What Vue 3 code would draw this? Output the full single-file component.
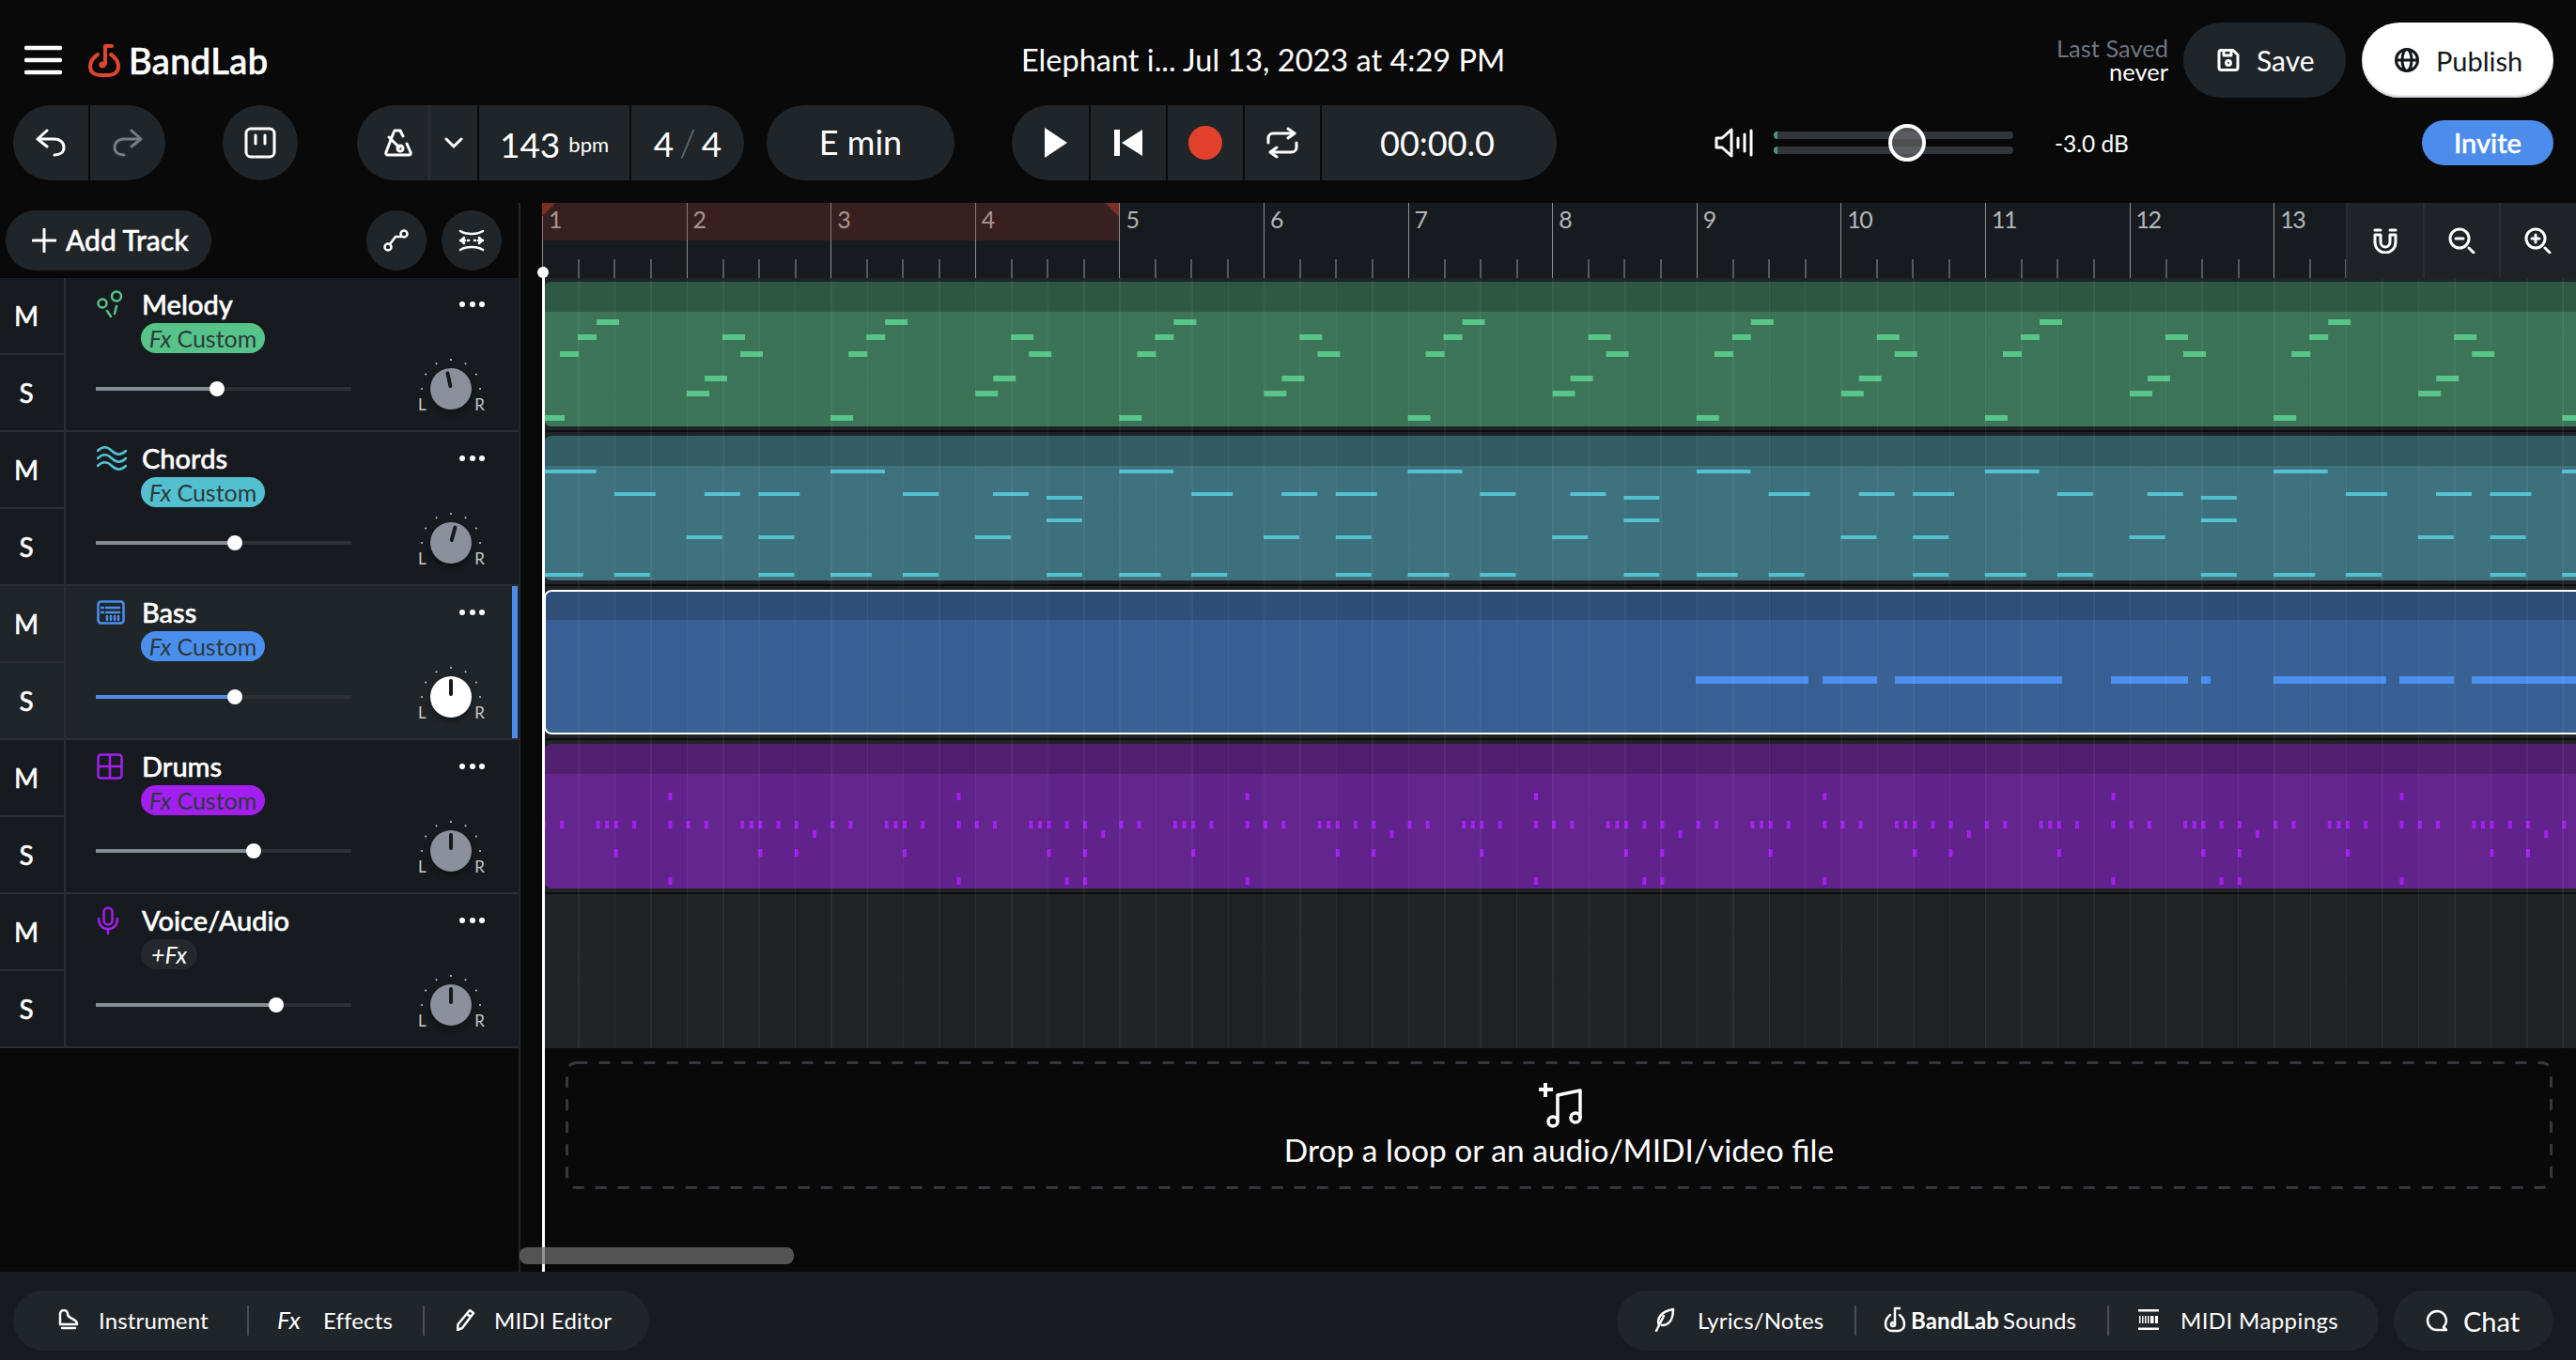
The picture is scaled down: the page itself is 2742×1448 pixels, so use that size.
<script setup>
const BAR_WIDTH = 153.6
const LANE_WIDTH = 2166

const bars = Array.from({ length: 14 }, (_, i) => i + 1)

// repeats a note pattern along the whole lane, notes are [offset, width, top]
function repeatNotes(pattern, period, height) {
  const notes = []
  for (let start = 0; start < LANE_WIDTH; start += period) {
    for (const [x, w, y] of pattern) {
      notes.push({ x: start + x - 2, w, y, h: height })
    }
  }
  return notes
}

const melodyPattern = [
  [0, 24, 142], [19, 20, 74], [38, 20, 56], [58, 24, 40],
  [154, 24, 116], [173, 24, 100], [192, 24, 56], [211, 24, 74]
]

const chordsPattern = [
  [0, 57.6, 36], [307, 58, 36],
  [76.8, 44, 60], [172.8, 38, 60], [230.4, 44, 60], [384, 38, 60], [480, 38, 60],
  [537, 38, 64], [537, 38, 88],
  [153.6, 38, 106], [230.4, 38, 106], [460.8, 38, 106],
  [0, 44, 146], [76.8, 38, 146], [230.4, 38, 146], [307, 44, 146], [384, 38, 146], [537, 38, 146]
]

const bassNotes = [
  [1804, 120], [1939, 58], [2016, 178], [2246, 82], [2342, 10],
  [2419, 120], [2553, 58], [2630, 112]
].map(([x, w]) => ({ x: x - 578, w, y: 92, h: 8 }))

const drumsPattern = [
  ...[0, 19.2, 57.6, 67.2, 76.8, 96, 134.4, 153.6, 172.8, 211.2, 220.8, 230.4, 249.6, 268.8].flatMap((x) => [
    [x, 4, 82],
    [x + 307.2, 4, 82]
  ]),
  [134.4, 4, 52], [441.6, 4, 52],
  [288, 4, 92], [595.2, 4, 92],
  [76.8, 4, 112], [230.4, 4, 112], [268.8, 4, 112], [384, 4, 112], [537.6, 4, 112], [576, 4, 112],
  [134.4, 4, 142], [441.6, 4, 142], [556.8, 4, 142], [576, 4, 142]
]

const tracks = [
  { id: 'melody', name: 'Melody', pan: -12, volume: 129, notes: repeatNotes(melodyPattern, 307.2, 6) },
  { id: 'chords', name: 'Chords', pan: 15, volume: 148, notes: repeatNotes(chordsPattern, 614.4, 4) },
  { id: 'bass', name: 'Bass', pan: 0, volume: 148, notes: bassNotes, selected: true },
  { id: 'drums', name: 'Drums', pan: 0, volume: 168, notes: repeatNotes(drumsPattern, 614.4, 8) },
  { id: 'voice', name: 'Voice/Audio', pan: 0, volume: 192, empty: true }
]

const knobTicks = [-90, -60, -30, 0, 30, 60, 90].map((deg) => {
  const rad = (deg * Math.PI) / 180
  return { x: 36 + 31 * Math.sin(rad), y: 34 - 31 * Math.cos(rad) }
})
</script>

<template>
  <div class="daw">
    <header class="header">
      <div class="header-top">
        <div class="brand">
          <svg class="burger" width="40" height="32" viewBox="0 0 40 32">
            <path d="M2 3h36M2 16h36M2 29h36" />
          </svg>
          <svg class="logo" width="36" height="36" viewBox="0 0 36 36">
            <path d="M11 12C5 16 3 21 3 25c0 6 5 9 10 9h10c5 0 10-3 10-9 0-4-2-9-8-13" />
            <path d="M19 22V3h7" />
            <circle cx="16" cy="23" r="3.6" class="logo-dot" />
          </svg>
          <span class="brand-name">BandLab</span>
        </div>
        <div class="title">Elephant i... Jul 13, 2023 at 4:29 PM</div>
        <div class="save-area">
          <div class="last-saved">
            <span class="last-saved-label">Last Saved</span>
            <span>never</span>
          </div>
          <button class="btn btn-save">
            <svg class="ico" width="24" height="24" viewBox="0 0 24 24">
              <path d="M4 1.5h13l5 5V20a2.5 2.5 0 0 1-2.5 2.5h-15A2.5 2.5 0 0 1 2 20V4a2.5 2.5 0 0 1 2-2.5z" />
              <path d="M7 2v5h8V2" />
              <circle cx="12" cy="15" r="2.4" />
            </svg>
            Save
          </button>
          <button class="btn btn-publish">
            <svg class="ico" width="26" height="26" viewBox="0 0 26 26">
              <circle cx="13" cy="13" r="11.5" />
              <ellipse cx="13" cy="13" rx="5" ry="11.5" />
              <path d="M2 13h22" />
            </svg>
            Publish
          </button>
        </div>
      </div>

      <div class="header-controls">
        <div class="segments undo-group">
          <div class="seg seg-undo">
            <svg class="ico" width="32" height="30" viewBox="0 0 32 30">
              <path d="M12 2 2 11l10 8M2 11h18c6 0 10 4 10 9s-4 8-10 8" />
            </svg>
          </div>
          <div class="seg seg-undo seg-muted">
            <svg class="ico" width="32" height="30" viewBox="0 0 32 30">
              <path d="M20 2l10 9-10 8M30 11H12C6 11 2 15 2 20s4 8 10 8" />
            </svg>
          </div>
        </div>

        <button class="round-btn round-pause">
          <svg class="ico" width="34" height="34" viewBox="0 0 34 34">
            <rect x="2" y="2" width="30" height="30" rx="5" />
            <path d="M12 9v9M22 9v9" />
          </svg>
        </button>

        <div class="segments tempo-group">
          <div class="seg seg-metronome">
            <svg class="ico" width="30" height="30" viewBox="0 0 30 30">
              <path d="M11 2h6l3 6M24 16l4 9c.6 2-.5 3-2 3H4c-1.500 0-2.600-1-2-3l8-21" />
              <path d="M5 9l11 11" />
              <circle cx="17" cy="21" r="3" />
            </svg>
          </div>
          <div class="seg seg-chevron">
            <svg class="ico" width="20" height="12" viewBox="0 0 20 12">
              <path d="M2 2l8 8 8-8" />
            </svg>
          </div>
          <div class="seg seg-bpm">
            <span class="big-value">143</span>
            <span class="bpm-unit">bpm</span>
          </div>
          <div class="seg seg-signature">
            <span class="big-value">4</span>
            <span class="signature-slash">/</span>
            <span class="big-value">4</span>
          </div>
        </div>

        <button class="round-btn key-btn">E min</button>

        <div class="segments transport">
          <div class="seg seg-transport">
            <svg width="24" height="32" viewBox="0 0 24 32"><path class="solid" d="M0 0l24 16L0 32z" /></svg>
          </div>
          <div class="seg seg-transport">
            <svg width="30" height="28" viewBox="0 0 30 28"><path class="solid" d="M0 0h6v28H0zM30 0v28L8 14z" /></svg>
          </div>
          <div class="seg seg-transport">
            <span class="record-dot" />
          </div>
          <div class="seg seg-transport">
            <svg class="ico" width="36" height="34" viewBox="0 0 36 34">
              <path d="M24 2l7 5-7 5M31 7H8a5 5 0 0 0-5 5v5M12 32l-7-5 7-5M5 27h23a5 5 0 0 0 5-5v-5" />
            </svg>
          </div>
          <div class="seg seg-time">00:00.0</div>
        </div>

        <div class="volume">
          <svg class="ico" width="42" height="32" viewBox="0 0 42 32">
            <path d="M2 11h6l10-9v28l-10-9H2z" />
            <path d="M25 11v10M32 7v18M39 3v26" />
          </svg>
          <div class="volume-slider">
            <span class="volume-bar" />
            <span class="volume-bar" />
            <span class="volume-thumb" />
          </div>
          <span class="volume-db">-3.0 dB</span>
        </div>

        <button class="btn-invite">Invite</button>
      </div>
    </header>

    <main class="main">
      <aside class="sidebar">
        <div class="sidebar-tools">
          <button class="add-track">
            <svg class="ico" width="26" height="26" viewBox="0 0 26 26"><path d="M13 1v24M1 13h24" /></svg>
            <span class="medium add-track-label">Add Track</span>
          </button>
          <button class="tool-round tool-first">
            <svg class="ico ico-thin" width="28" height="24" viewBox="0 0 28 24">
              <circle cx="5" cy="19" r="3.500" />
              <circle cx="22" cy="5" r="3.500" />
              <path d="M7 16l6-8h6" />
            </svg>
          </button>
          <button class="tool-round">
            <svg class="ico ico-thin" width="28" height="24" viewBox="0 0 28 24">
              <path d="M2 2c6 4 18 4 24 0M2 22c6-4 18-4 24 0M2 12h5M21 12h5M10 12h1M17 12h1M6 9l-3 3 3 3M22 9l3 3-3 3" />
            </svg>
          </button>
        </div>

        <div v-for="track in tracks" :key="track.id" class="track" :class="[track.id, { selected: track.selected }]">
          <div class="mute-solo">
            <button>M</button>
            <button>S</button>
          </div>
          <div class="track-body">
            <div class="track-head">
              <span class="track-icon">
                <svg v-if="track.id === 'melody'" class="ico ico-thin" width="28" height="30" viewBox="0 0 28 30">
                  <circle cx="6" cy="14" r="4.500" />
                  <circle cx="21" cy="6.500" r="5" />
                  <path d="M11 22l4 6M21 17l-2 8" />
                </svg>
                <svg v-else-if="track.id === 'chords'" class="ico ico-thin" width="32" height="26" viewBox="0 0 32 26">
                  <path d="M1 5c5-5 10-5 15 0s10 5 15 0M1 13c5-5 10-5 15 0s10 5 15 0M1 21c5-5 10-5 15 0s10 5 15 0" />
                </svg>
                <svg v-else-if="track.id === 'bass'" class="ico ico-thin" width="30" height="26" viewBox="0 0 30 26">
                  <rect x="1.500" y="1.500" width="27" height="23" rx="3" />
                  <path d="M5 8h2M10 8h14M5 13h2M10 13h14M11 21v-4M15 21v-4M19 21v-4M23 21v-4" />
                </svg>
                <svg v-else-if="track.id === 'drums'" class="ico ico-thin" width="28" height="28" viewBox="0 0 28 28">
                  <rect x="1.500" y="1.500" width="25" height="25" rx="3" />
                  <path d="M14 2v24M2 14h24" />
                </svg>
                <svg v-else class="ico ico-thin" width="24" height="30" viewBox="0 0 24 30">
                  <rect x="7.500" y="1.500" width="9" height="18" rx="4.500" />
                  <path d="M2 13c0 7 4 11 10 11s10-4 10-11M12 24v5" />
                </svg>
              </span>
              <span class="track-name medium">{{ track.name }}</span>
              <span class="track-menu"><i /><i /><i /></span>
            </div>

            <span v-if="track.empty" class="fx-add"><em>+Fx</em></span>
            <span v-else class="fx-badge"><em>Fx</em> Custom</span>

            <div class="track-controls">
              <div class="fader">
                <span class="fader-fill" :style="{ width: track.volume + 'px' }" />
                <span class="fader-thumb" />
              </div>
              <div class="knob">
                <svg class="knob-ticks" width="72" height="68" viewBox="0 0 72 68">
                  <circle v-for="(tick, i) in knobTicks" :key="i" :cx="tick.x" :cy="tick.y" r="1" />
                </svg>
                <span class="knob-dial" :style="{ transform: `rotate(${track.pan}deg)` }"><i /></span>
                <span class="knob-label knob-l">L</span>
                <span class="knob-label knob-r">R</span>
              </div>
            </div>
          </div>
        </div>
      </aside>

      <section class="timeline">
        <div class="ruler">
          <div v-for="bar in bars" :key="bar" class="ruler-bar" :style="{ flexBasis: BAR_WIDTH + 'px' }">{{ bar }}</div>
          <div class="loop-region" />
          <div class="ruler-tools">
            <button>
              <svg class="ico" width="28" height="28" viewBox="0 0 28 28">
                <path d="M3 8v8a11 11 0 0 0 22 0V8h-6v8a5 5 0 0 1-10 0V8zM3 3h6M19 3h6" />
              </svg>
            </button>
            <button>
              <svg class="ico" width="30" height="28" viewBox="0 0 30 28">
                <circle cx="12" cy="12" r="10" />
                <path d="M8 12h8M22 22l5 5" />
              </svg>
            </button>
            <button>
              <svg class="ico" width="30" height="28" viewBox="0 0 30 28">
                <circle cx="12" cy="12" r="10" />
                <path d="M8 12h8M12 8v8M22 22l5 5" />
              </svg>
            </button>
          </div>
        </div>

        <div class="lanes">
          <div v-for="track in tracks" :key="track.id" class="lane" :class="track.id">
            <div v-if="track.notes" class="clip" :class="{ selected: track.selected }">
              <svg class="clip-notes" width="100%" height="100%">
                <rect v-for="(note, i) in track.notes" :key="i" :x="note.x" :y="note.y" :width="note.w" :height="note.h" />
              </svg>
            </div>
          </div>
          <div class="lane-grid" />
        </div>

        <div class="dropzone">
          <svg class="dropzone-border" width="2115" height="136">
            <rect x="1.5" y="1.5" width="2112" height="133" rx="10" />
          </svg>
          <svg class="ico drop-icon" width="48" height="50" viewBox="0 0 48 50">
            <path class="drop-plus" d="M9 2v15M2 9h15" />
            <path d="M22 43V15l24-5v29" />
            <circle cx="17" cy="43" r="5" />
            <circle cx="41" cy="39" r="5" />
          </svg>
          <span class="dropzone-text">Drop a loop or an audio/MIDI/video file</span>
        </div>

        <div class="playhead" />
        <div class="scrollbar" />
      </section>
    </main>

    <footer class="footer">
      <div class="dock dock-left">
        <div class="dock-item dock-instrument">
          <svg class="ico ico-thin" width="22" height="22" viewBox="0 0 22 22">
            <path d="M2 16V5a4 4 0 0 1 8 0c0 4 4 4 8 7 2 1 2 2 2 4zM4 20h14" />
          </svg>
          Instrument
        </div>
        <i class="dock-sep" />
        <div class="dock-item dock-effects">
          <em class="dock-fx">Fx</em>
          Effects
        </div>
        <i class="dock-sep" />
        <div class="dock-item dock-editor">
          <svg class="ico ico-thin" width="20" height="24" viewBox="0 0 20 24">
            <path d="M14 2l4 3L6 21l-5 2 .5-6zM11 6l4 3" />
          </svg>
          MIDI Editor
        </div>
      </div>

      <div class="dock-right">
        <div class="dock dock-tools">
          <div class="dock-item dock-lyrics">
            <svg class="ico ico-thin" width="22" height="26" viewBox="0 0 22 26">
              <path d="M5 19C2 12 7 4 20 2c0 10-4 17-12 17M2 25l8-16" />
            </svg>
            Lyrics/Notes
          </div>
          <i class="dock-sep" />
          <div class="dock-item dock-sounds">
            <svg class="ico ico-thin" width="24" height="28" viewBox="0 0 24 28">
              <path d="M7 9c-4 3-5 6-5 10 0 5 4 7 7 7h6c3 0 7-2 7-7 0-4-1-7-5-10" />
              <path d="M12 19V2h5" />
              <circle cx="10" cy="19" r="2" />
            </svg>
            <span class="sounds-label"><b>BandLab</b>Sounds</span>
          </div>
          <i class="dock-sep" />
          <div class="dock-item dock-mappings">
            <svg class="midi-icon" width="22" height="22" viewBox="0 0 22 22">
              <path class="solid" d="M0 0h22v2.500H0zM0 19.500h22V22H0zM1 7h1.500v8H1zM4 7h1.500v8H4zM7 7h1.500v8H7zM10 7h1.500v8H10zM13 7h3.500v8H13zM18 7h3v8h-3z" />
            </svg>
            MIDI Mappings
          </div>
        </div>
        <div class="dock dock-chat">
          <svg class="ico ico-thin" width="24" height="24" viewBox="0 0 24 24">
            <path d="M12 2a10 10 0 1 0 0 20h10l-3-3a10 10 0 0 0-7-17z" />
          </svg>
          Chat
        </div>
      </div>
    </footer>
  </div>
</template>

<style scoped>
  .daw {
    --panel: #171b1f;
    --raised: #202529;
    --line: #2a2e33;
    width: 2742px;
    height: 1448px;
    display: flex;
    flex-direction: column;
    overflow: hidden;
    background: #090909;
    color: #fff;
    font-family: Lato, "Liberation Sans", sans-serif;
  }

  button {
    border: 0;
    padding: 0;
    color: inherit;
    font: inherit;
    background: none;
  }

  .ico {
    flex: none;
    fill: none;
    stroke: currentColor;
    stroke-width: 3;
    stroke-linecap: round;
    stroke-linejoin: round;
  }

  .ico-thin {
    stroke-width: 2.5;
  }

  .solid {
    fill: currentColor;
  }

  /* Lato has no weight between regular and bold that reads like the original */
  .medium {
    font-weight: 500;
    -webkit-text-stroke: 0.5px currentColor;
  }

  /* header */
  .header {
    height: 216px;
    flex: none;
  }

  .header-top {
    height: 112px;
    padding-top: 24px;
    box-sizing: border-box;
    display: flex;
    align-items: flex-start;
  }

  .brand {
    flex: 0 0 1087px;
    height: 80px;
    box-sizing: border-box;
    padding-left: 26px;
    display: flex;
    align-items: center;
  }

  .burger path {
    fill: none;
    stroke: #fff;
    stroke-width: 4.5;
    stroke-linecap: round;
  }

  .logo {
    margin-left: 27px;
  }

  .logo path {
    fill: none;
    stroke: #e2452f;
    stroke-width: 4;
    stroke-linecap: round;
    stroke-linejoin: round;
  }

  .logo-dot {
    fill: #e2452f;
  }

  .brand-name {
    margin-left: 8px;
    font-size: 38px;
    font-weight: 500;
    letter-spacing: 0.4px;
    -webkit-text-stroke: 0.7px currentColor;
  }

  .title {
    height: 80px;
    line-height: 80px;
    font-size: 32.5px;
    white-space: nowrap;
  }

  .save-area {
    margin-left: auto;
    margin-right: 24px;
    display: flex;
    align-items: center;
    height: 80px;
  }

  .last-saved {
    display: flex;
    flex-direction: column;
    align-items: flex-end;
    margin-right: 16px;
    font-size: 25.500px;
    line-height: 25px;
  }

  .last-saved-label {
    color: #6f7580;
  }

  .btn {
    height: 80px;
    border-radius: 40px;
    display: flex;
    align-items: center;
    font-size: 29px;
  }

  .btn-save {
    width: 173px;
    padding-left: 36px;
    gap: 18px;
    box-sizing: border-box;
    background: var(--raised);
    font-size: 30px;
  }

  .btn-publish {
    width: 204px;
    margin-left: 17px;
    padding-left: 35px;
    gap: 18px;
    box-sizing: border-box;
    background: #fff;
    color: #14171a;
    box-shadow: inset 0 -2px 2px #c9ccd0;
  }

  .header-controls {
    height: 80px;
    padding-left: 14px;
    display: flex;
    align-items: center;
  }

  .segments {
    display: flex;
    gap: 2px;
    height: 80px;
    border-radius: 40px;
    overflow: hidden;
  }

  .seg {
    height: 100%;
    display: flex;
    align-items: center;
    justify-content: center;
    background: var(--raised);
  }

  .seg-undo {
    width: 80px;
  }

  .seg-muted {
    color: #777c82;
  }

  .round-btn {
    height: 80px;
    border-radius: 40px;
    background: var(--raised);
    display: flex;
    align-items: center;
    justify-content: center;
  }

  .round-pause {
    width: 80px;
    margin-left: 61px;
  }

  .tempo-group {
    margin-left: 63px;
  }

  .seg-metronome {
    width: 78px;
    padding-left: 12px;
    box-sizing: border-box;
    border-right: 2px solid var(--line);
    margin-right: -2px;
  }

  .seg-chevron {
    width: 50px;
  }

  .seg-bpm {
    width: 160px;
    gap: 9px;
    padding-top: 3px;
    box-sizing: border-box;
  }

  .seg-signature {
    width: 120px;
    gap: 6px;
  }

  .big-value {
    font-size: 37px;
  }

  .bpm-unit {
    font-size: 22px;
  }

  .signature-slash {
    font-size: 40px;
    font-weight: 300;
    color: #6a6f75;
  }

  .key-btn {
    width: 200px;
    margin-left: 24px;
    padding-bottom: 2px;
    box-sizing: border-box;
    font-size: 36px;
  }

  .transport {
    margin-left: 61px;
  }

  .seg-transport {
    width: 80px;
  }

  .seg-transport:first-child {
    width: 82px;
    padding-left: 12px;
    box-sizing: border-box;
  }

  .record-dot {
    width: 36px;
    height: 36px;
    border-radius: 50%;
    background: #e2412b;
  }

  .seg-time {
    width: 250px;
    padding-right: 4px;
    box-sizing: border-box;
    font-size: 36px;
  }

  .volume {
    margin-left: 168px;
    display: flex;
    align-items: center;
  }

  .volume-slider {
    position: relative;
    width: 255px;
    margin-left: 21px;
    display: flex;
    flex-direction: column;
    gap: 8px;
  }

  .volume-bar {
    height: 8px;
    border-radius: 4px;
    background: linear-gradient(90deg, #4a9a7a 0 4px, #31353c 4px);
  }

  .volume-thumb {
    position: absolute;
    left: 122px;
    top: -8px;
    width: 40px;
    height: 40px;
    box-sizing: border-box;
    border: 4px solid #fff;
    border-radius: 50%;
    background: rgba(110, 110, 110, 0.7);
  }

  .volume-db {
    margin-left: 44px;
    font-size: 24.500px;
  }

  .btn-invite {
    margin-left: auto;
    margin-right: 24px;
    width: 140px;
    height: 48px;
    padding-bottom: 2px;
    box-sizing: border-box;
    border-radius: 24px;
    background: #4c8ceb;
    font-size: 29px;
    font-weight: 500;
    -webkit-text-stroke: 0.5px currentColor;
  }

  /* main */
  .main {
    flex: 1;
    display: flex;
    min-height: 0;
  }

  .sidebar {
    flex: 0 0 553px;
    box-sizing: border-box;
    border-right: 2px solid #222529;
  }

  .sidebar-tools {
    height: 80px;
    box-sizing: border-box;
    padding: 8px 0 8px 6px;
    display: flex;
    align-items: flex-start;
  }

  .add-track {
    width: 219px;
    height: 64px;
    padding-left: 28px;
    box-sizing: border-box;
    border-radius: 32px;
    background: var(--raised);
    display: flex;
    align-items: center;
    gap: 10px;
    font-size: 30px;
  }

  .add-track-label {
    margin-top: -2px;
  }

  .tool-round {
    width: 64px;
    height: 64px;
    border-radius: 50%;
    background: var(--raised);
    display: flex;
    align-items: center;
    justify-content: center;
    margin-left: 16px;
  }

  .tool-first {
    margin-left: 165px;
  }

  .melody {
    --c: #56c489;
    --dark: #2d5743;
    --body: #3b7357;
  }

  .chords {
    --c: #53c0d0;
    --dark: #315a62;
    --body: #3c707c;
  }

  .bass {
    --c: #4a8fee;
    --dark: #2d4d77;
    --body: #375f93;
  }

  .drums {
    --c: #a31ff0;
    --dark: #4f1e6e;
    --body: #60238c;
  }

  .voice {
    --c: #a31ff0;
  }

  .track {
    position: relative;
    height: 164px;
    box-sizing: border-box;
    display: flex;
    background: var(--panel);
    border-bottom: 2px solid var(--line);
  }

  .track.selected {
    background: var(--raised);
  }

  .track.selected::after {
    content: '';
    position: absolute;
    top: 0;
    bottom: 0;
    right: 1px;
    width: 6px;
    background: #4c8ceb;
  }

  .mute-solo {
    flex: 0 0 70px;
    box-sizing: border-box;
    border-right: 2px solid var(--line);
    display: flex;
    flex-direction: column;
  }

  .mute-solo button {
    flex: 1;
    padding-right: 12px;
    font-size: 28px;
    font-weight: 500;
    -webkit-text-stroke: 0.4px currentColor;
  }

  .mute-solo button:first-child {
    border-bottom: 2px solid var(--line);
  }

  .track-body {
    flex: 1;
    padding: 13px 36px 0 32px;
  }

  .track-head {
    height: 30px;
    display: flex;
    align-items: center;
  }

  .track-icon {
    flex: 0 0 49px;
    color: var(--c);
    display: flex;
    align-items: center;
    padding-left: 1px;
    box-sizing: border-box;
  }

  .track-name {
    margin-top: -2px;
    font-size: 29px;
  }

  .track-menu {
    margin-left: auto;
    display: flex;
    gap: 4.500px;
  }

  .track-menu i {
    width: 6px;
    height: 6px;
    border-radius: 50%;
    background: #fff;
  }

  .fx-badge,
  .fx-add {
    display: flex;
    align-items: center;
    justify-content: center;
    gap: 6px;
    height: 32px;
    margin: 5px 0 0 48px;
    border-radius: 16px;
    font-size: 25px;
  }

  .fx-badge {
    width: 132px;
    background: var(--c);
    color: #2b3a3c;
  }

  .fx-add {
    width: 60px;
    background: #24282c;
  }

  .track-controls {
    height: 60px;
    margin-top: 8px;
    display: flex;
    align-items: center;
  }

  .fader {
    position: relative;
    width: 272px;
    height: 4px;
    background: #2c2f36;
    display: flex;
    align-items: center;
  }

  .fader-fill {
    height: 100%;
    background: #858b97;
  }

  .selected .fader-fill {
    background: #4c8ceb;
  }

  .fader-thumb {
    width: 16px;
    height: 16px;
    margin-left: -8px;
    border-radius: 50%;
    background: #fff;
  }

  .knob {
    position: relative;
    margin-left: 70px;
    width: 72px;
    height: 60px;
    flex: none;
  }

  .knob-ticks {
    position: absolute;
    left: 0;
    top: -4px;
    fill: #c8c8c8;
  }

  .knob-dial {
    position: absolute;
    left: 14px;
    top: 8px;
    width: 44px;
    height: 44px;
    border-radius: 50%;
    background: #8a909c;
    box-shadow: 0 4px 6px rgba(0, 0, 0, 0.35);
    display: flex;
    justify-content: center;
  }

  .selected .knob-dial {
    background: #fff;
  }

  .knob-dial i {
    width: 4px;
    height: 18px;
    margin-top: 3px;
    border-radius: 2px;
    background: #16181b;
  }

  .knob-label {
    position: absolute;
    top: 36px;
    font-size: 17px;
    color: #c8c8c8;
  }

  .knob-l {
    left: 1px;
  }

  .knob-r {
    right: 0;
  }

  /* timeline */
  .timeline {
    position: relative;
    flex: 1;
    min-width: 0;
    padding-left: 23px;
  }

  .ruler {
    position: relative;
    height: 80px;
    display: flex;
    overflow: hidden;
    background: var(--panel);
  }

  .ruler-bar {
    flex-shrink: 0;
    box-sizing: border-box;
    border-left: 1.500px solid #8c8f92;
    padding: 2px 0 0 6px;
    font-size: 25px;
    letter-spacing: -1.500px;
    line-height: 30px;
    color: #b4b6b8;
    background-image:
      linear-gradient(#55585c, #55585c),
      linear-gradient(#55585c, #55585c),
      linear-gradient(#55585c, #55585c);
    background-repeat: no-repeat;
    background-size: 2px 20px;
    background-position: 37px 100%, 75px 100%, 114px 100%;
  }

  .loop-region {
    position: absolute;
    left: 0;
    top: 0;
    width: 614.400px;
    height: 40px;
    background:
      linear-gradient(135deg, #7a2f24 0 10px, transparent 10px) 0 0 / 20px 20px no-repeat,
      linear-gradient(225deg, #7a2f24 0 10px, transparent 10px) 100% 0 / 20px 20px no-repeat,
      rgba(150, 45, 35, 0.26);
  }

  .ruler-tools {
    position: absolute;
    right: 0;
    top: 0;
    bottom: 0;
    width: 245px;
    display: flex;
    background: #1f2327;
  }

  .ruler-tools button {
    flex: 1;
    display: flex;
    align-items: center;
    justify-content: center;
    border-left: 2px solid var(--line);
  }

  .lanes {
    position: relative;
  }

  .lane {
    height: 164px;
    box-sizing: border-box;
    padding: 4px 0 6px 2px;
    background: #1e2225;
    border-bottom: 2px solid #0b0c0d;
  }

  .lane.voice {
    border-bottom: 0;
  }

  .clip {
    position: relative;
    height: 154px;
    box-sizing: border-box;
    border-radius: 8px 0 0 8px;
    overflow: hidden;
    background: linear-gradient(var(--dark) 0 32px, var(--body) 32px);
  }

  .clip.selected::after {
    content: '';
    position: absolute;
    inset: 0;
    border: 2.500px solid #fff;
    border-right: 0;
    border-radius: 8px 0 0 8px;
  }

  .clip-notes {
    display: block;
    fill: var(--c);
  }

  .lane-grid {
    position: absolute;
    inset: 0;
    pointer-events: none;
    background:
      repeating-linear-gradient(90deg, rgba(255, 255, 255, 0.05) 0 1.500px, transparent 1.500px 38.400px),
      repeating-linear-gradient(90deg, rgba(255, 255, 255, 0.012) 0 76.800px, transparent 76.800px 153.600px);
  }

  .dropzone {
    position: relative;
    width: 2115px;
    height: 136px;
    margin: 14px 0 0 25px;
    padding-top: 21px;
    box-sizing: border-box;
    display: flex;
    flex-direction: column;
    align-items: center;
  }

  .dropzone-border {
    position: absolute;
    left: 0;
    top: 0;
    fill: none;
    stroke: #35383f;
    stroke-width: 3;
    stroke-dasharray: 12 12;
  }

  .drop-icon {
    stroke-width: 3.500;
  }

  .drop-plus {
    stroke-width: 4;
    stroke-linecap: butt;
  }

  .dropzone-text {
    margin-top: 3px;
    font-size: 33.500px;
    line-height: 40px;
  }

  .playhead {
    position: absolute;
    left: 23px;
    top: 68px;
    bottom: 0;
    width: 3px;
    background: #fff;
  }

  .playhead::before {
    content: '';
    position: absolute;
    left: -5px;
    top: 0;
    width: 12px;
    height: 12px;
    border-radius: 50%;
    background: #fff;
  }

  .scrollbar {
    position: absolute;
    left: -1px;
    bottom: 8px;
    width: 292px;
    height: 18px;
    border-radius: 8px;
    background: rgba(110, 110, 110, 0.75);
  }

  /* footer */
  .footer {
    flex: 0 0 94px;
    box-sizing: border-box;
    padding: 20px 24px 0 14px;
    display: flex;
    justify-content: space-between;
    background: var(--panel);
  }

  .dock {
    height: 64px;
    border-radius: 32px;
    background: var(--raised);
    display: flex;
    align-items: center;
    font-size: 24px;
  }

  .dock-left {
    width: 677px;
  }

  .dock-item {
    height: 100%;
    padding-bottom: 2px;
    box-sizing: border-box;
    display: flex;
    align-items: center;
    white-space: nowrap;
    letter-spacing: 0.15px;
  }

  .dock-sep {
    flex: none;
    width: 2px;
    height: 32px;
    background: #4a4e54;
  }

  .dock-instrument {
    width: 249px;
    padding-left: 48px;
    gap: 21px;
  }

  .dock-effects {
    width: 185px;
    padding-left: 30px;
    gap: 24px;
  }

  .dock-fx {
    font-size: 26px;
  }

  .dock-editor {
    padding-left: 34px;
    gap: 20px;
  }

  .dock-right {
    display: flex;
    gap: 16px;
  }

  .dock-tools {
    width: 811px;
  }

  .dock-lyrics {
    width: 253px;
    padding-left: 40px;
    gap: 24px;
  }

  .dock-sounds {
    width: 267px;
    padding-left: 29px;
    gap: 5px;
  }

  .sounds-label b {
    font-weight: 700;
    margin-right: 4px;
  }

  .dock-mappings {
    padding-left: 31px;
    gap: 23px;
    letter-spacing: 0.4px;
  }

  .midi-icon {
    flex: none;
  }

  .dock-chat {
    width: 170px;
    padding-left: 34px;
    gap: 16px;
    box-sizing: border-box;
    font-size: 29px;
  }
</style>

<style>
  html,
  body {
    margin: 0;
    background: #090909;
  }
</style>
